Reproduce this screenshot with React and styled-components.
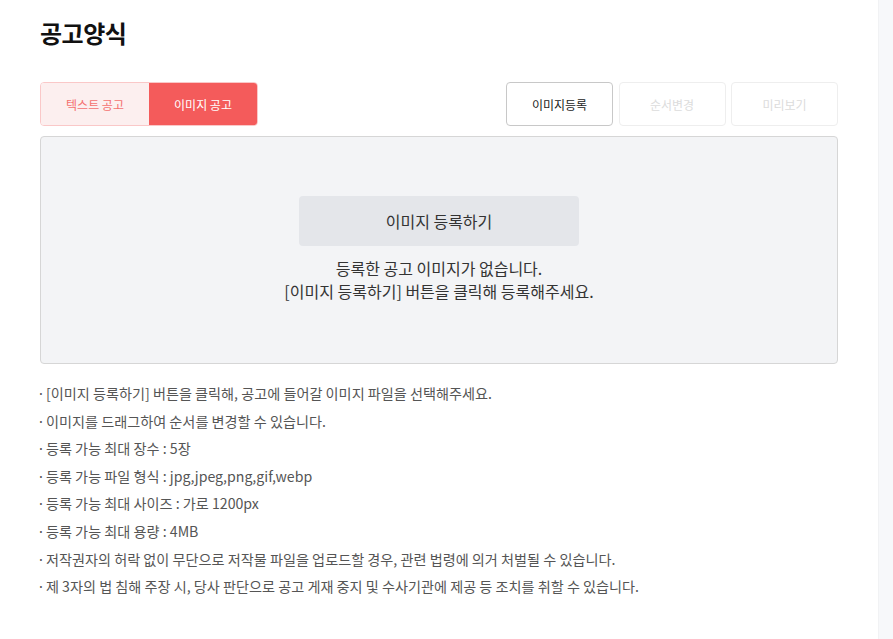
import React from 'react'
import styled, { createGlobalStyle } from 'styled-components'

const notes = [
  '[이미지 등록하기] 버튼을 클릭해, 공고에 들어갈 이미지 파일을 선택해주세요.',
  '이미지를 드래그하여 순서를 변경할 수 있습니다.',
  '등록 가능 최대 장수 : 5장',
  '등록 가능 파일 형식 : jpg,jpeg,png,gif,webp',
  '등록 가능 최대 사이즈 : 가로 1200px',
  '등록 가능 최대 용량 : 4MB',
  '저작권자의 허락 없이 무단으로 저작물 파일을 업로드할 경우, 관련 법령에 의거 처벌될 수 있습니다.',
  '제 3자의 법 침해 주장 시, 당사 판단으로 공고 게재 중지 및 수사기관에 제공 등 조치를 취할 수 있습니다.',
]

const App = () => (
  <>
    <GlobalStyle />
    <Page>
      <Main>
        <Title>공고양식</Title>
        <Toolbar>
          <TabGroup>
            <Tab>텍스트 공고</Tab>
            <Tab active>이미지 공고</Tab>
          </TabGroup>
          <Actions>
            <ActionButton>이미지등록</ActionButton>
            <ActionButton disabled>순서변경</ActionButton>
            <ActionButton disabled>미리보기</ActionButton>
          </Actions>
        </Toolbar>
        <DropPanel>
          <UploadButton>이미지 등록하기</UploadButton>
          <EmptyText>
            등록한 공고 이미지가 없습니다.
            <br />
            [이미지 등록하기] 버튼을 클릭해 등록해주세요.
          </EmptyText>
        </DropPanel>
        <NoteList>
          {notes.map((n) => (
            <Note key={n}>{n}</Note>
          ))}
        </NoteList>
      </Main>
      <SideStrip />
    </Page>
  </>
)

export default App

// STYLES

const GlobalStyle = createGlobalStyle`
  html, body {
    margin: 0;
    padding: 0;
    background: #fff;
  }
  body {
    font-family: 'Noto Sans CJK KR', 'Noto Sans', sans-serif;
  }
`

const Page = styled.div`
  display: flex;
  width: 893px;
  height: 639px;
  overflow: hidden;
`

const Main = styled.div`
  flex: 0 0 auto;
  width: 798px;
  padding: 0 40px;
`

const SideStrip = styled.div`
  flex: 1;
  background: #f7f8fa;
  border-left: 1px solid #f1f2f4;
`

const Title = styled.h1`
  margin: 17px 0 0;
  font-size: 24px;
  font-weight: 700;
  color: #111;
  line-height: 32px;
  letter-spacing: -0.5px;
`

const Toolbar = styled.div`
  display: flex;
  justify-content: space-between;
  margin-top: 33px;
`

const TabGroup = styled.div`
  display: flex;
  border-radius: 4px;
  overflow: hidden;
  border: 1px solid #fac8c8;
`

const Tab = styled.button`
  width: 108px;
  height: 42px;
  border: none;
  font-family: inherit;
  font-size: 12px;
  background: ${(p) => (p.active ? '#f45b5b' : '#fcefef')};
  color: ${(p) => (p.active ? '#fff' : '#f4716f')};
  padding: 0;
`

const Actions = styled.div`
  display: flex;
  gap: 5.5px;
`

const ActionButton = styled.button`
  width: 107px;
  height: 44px;
  border-radius: 4px;
  background: #fff;
  font-family: inherit;
  font-size: 12px;
  padding: 0;
  border: 1px solid ${(p) => (p.disabled ? '#eeeeee' : '#c8c8c8')};
  color: ${(p) => (p.disabled ? '#dcdcdc' : '#222')};
`

const DropPanel = styled.div`
  margin-top: 10px;
  height: 228px;
  background: #f3f4f6;
  border: 1px solid #d6d6d6;
  border-radius: 4px;
  display: flex;
  flex-direction: column;
  align-items: center;
  padding-top: 59px;
  box-sizing: border-box;
`

const UploadButton = styled.button`
  width: 280px;
  height: 50px;
  border: none;
  border-radius: 4px;
  background: #e4e6ea;
  font-family: inherit;
  font-size: 16px;
  color: #333;
`

const EmptyText = styled.p`
  margin: 11px 0 0;
  text-align: center;
  font-size: 16px;
  line-height: 23px;
  color: #333;
`

const NoteList = styled.ul`
  list-style: none;
  margin: 16px 0 0 -3px;
  padding: 0;
`

const Note = styled.li`
  font-size: 14.15px;
  line-height: 27.6px;
  color: #555;

  &::before {
    content: '·';
    margin-right: 1px;
  }
`
